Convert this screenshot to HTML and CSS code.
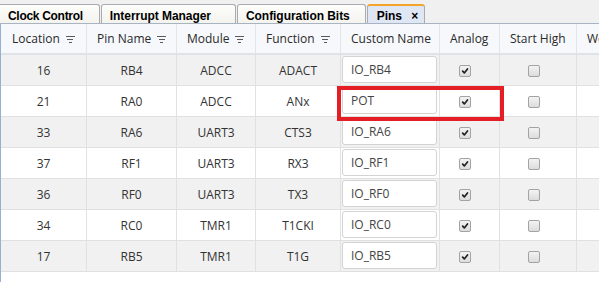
FILE: index.html
```html
<!DOCTYPE html>
<html lang="en">
<head>
<meta charset="utf-8">
<title>Pins</title>
<link rel="stylesheet" href="styles.css">
</head>
<body>
<div class="tabs">
  <div class="tab">Clock Control</div>
  <div class="tab wide">Interrupt Manager</div>
  <div class="tab narrow">Configuration Bits</div>
  <div class="tab active">Pins <span class="close">×</span></div>
</div>
<div class="grid-wrap">
  <div class="row head">
    <div class="cell">Location <span class="filter"><i></i><i></i><i></i></span></div>
    <div class="cell">Pin Name <span class="filter"><i></i><i></i><i></i></span></div>
    <div class="cell">Module <span class="filter"><i></i><i></i><i></i></span></div>
    <div class="cell">Function <span class="filter"><i></i><i></i><i></i></span></div>
    <div class="cell">Custom Name</div>
    <div class="cell">Analog</div>
    <div class="cell">Start High</div>
    <div class="cell">Weak Pullup</div>
  </div>

  <div class="row">
    <div class="cell c">16</div><div class="cell c">RB4</div><div class="cell c">ADCC</div><div class="cell c">ADACT</div>
    <div class="cell inp"><span class="input">IO_RB4</span></div>
    <div class="cell chk"><span class="box on"><svg viewBox="0 0 12 12"><path d="M3.2 6.2 L5.2 8.3 L9 3.6"/></svg></span></div>
    <div class="cell chk"><span class="box"></span></div>
    <div class="cell"></div>
  </div>
  <div class="row">
    <div class="cell c">21</div><div class="cell c">RA0</div><div class="cell c">ADCC</div><div class="cell c">ANx</div>
    <div class="cell inp"><span class="input">POT</span></div>
    <div class="cell chk"><span class="box on"><svg viewBox="0 0 12 12"><path d="M3.2 6.2 L5.2 8.3 L9 3.6"/></svg></span></div>
    <div class="cell chk"><span class="box"></span></div>
    <div class="cell"></div>
  </div>
  <div class="row">
    <div class="cell c">33</div><div class="cell c">RA6</div><div class="cell c">UART3</div><div class="cell c">CTS3</div>
    <div class="cell inp"><span class="input">IO_RA6</span></div>
    <div class="cell chk"><span class="box on"><svg viewBox="0 0 12 12"><path d="M3.2 6.2 L5.2 8.3 L9 3.6"/></svg></span></div>
    <div class="cell chk"><span class="box"></span></div>
    <div class="cell"></div>
  </div>
  <div class="row">
    <div class="cell c">37</div><div class="cell c">RF1</div><div class="cell c">UART3</div><div class="cell c">RX3</div>
    <div class="cell inp"><span class="input">IO_RF1</span></div>
    <div class="cell chk"><span class="box on"><svg viewBox="0 0 12 12"><path d="M3.2 6.2 L5.2 8.3 L9 3.6"/></svg></span></div>
    <div class="cell chk"><span class="box"></span></div>
    <div class="cell"></div>
  </div>
  <div class="row">
    <div class="cell c">36</div><div class="cell c">RF0</div><div class="cell c">UART3</div><div class="cell c">TX3</div>
    <div class="cell inp"><span class="input">IO_RF0</span></div>
    <div class="cell chk"><span class="box on"><svg viewBox="0 0 12 12"><path d="M3.2 6.2 L5.2 8.3 L9 3.6"/></svg></span></div>
    <div class="cell chk"><span class="box"></span></div>
    <div class="cell"></div>
  </div>
  <div class="row">
    <div class="cell c">34</div><div class="cell c">RC0</div><div class="cell c">TMR1</div><div class="cell c">T1CKI</div>
    <div class="cell inp"><span class="input">IO_RC0</span></div>
    <div class="cell chk"><span class="box on"><svg viewBox="0 0 12 12"><path d="M3.2 6.2 L5.2 8.3 L9 3.6"/></svg></span></div>
    <div class="cell chk"><span class="box"></span></div>
    <div class="cell"></div>
  </div>
  <div class="row">
    <div class="cell c">17</div><div class="cell c">RB5</div><div class="cell c">TMR1</div><div class="cell c">T1G</div>
    <div class="cell inp"><span class="input">IO_RB5</span></div>
    <div class="cell chk"><span class="box on"><svg viewBox="0 0 12 12"><path d="M3.2 6.2 L5.2 8.3 L9 3.6"/></svg></span></div>
    <div class="cell chk"><span class="box"></span></div>
    <div class="cell"></div>
  </div>

  <div class="highlight"></div>
</div>
</body>
</html>
```

FILE: styles.css
```css
html, body {
  margin: 0;
  padding: 0;
  width: 599px;
  height: 282px;
  overflow: hidden;
  background: #f0f0f0;
  font-family: "Open Sans", "Liberation Sans", sans-serif;
  color: #333;
}

.tabs {
  display: flex;
  align-items: flex-end;
  gap: 1px;
  height: 24px;
  box-sizing: border-box;
  border-bottom: 1px solid #a9b4c2;
  background: #f0f0f0;
}

.tab {
  height: 19px;
  box-sizing: border-box;
  padding: 4px 19px 0 8px;
  border: 1px solid #a8acb2;
  border-bottom: none;
  border-radius: 3px 3px 0 0;
  background: linear-gradient(#fdfdfb, #f4f3ee);
  font-family: "Liberation Sans", Arial, sans-serif;
  font-weight: bold;
  font-size: 12px;
  letter-spacing: -0.05px;
  line-height: 14px;
  color: #000;
  white-space: nowrap;
}

.tab:first-child {
  border-left: none;
  border-radius: 0 3px 0 0;
  padding-right: 16px;
  letter-spacing: -0.3px;
}

.tab.wide {
  padding-right: 24px;
}

.tab.narrow {
  padding-right: 15px;
}

.tab.active {
  padding-right: 6px;
  padding-left: 9px;
  border-top: 2px solid #f5a42a;
  padding-top: 3px;
  background: #dfe6f4;
}

.close {
  font-size: 12px;
  margin-left: 6px;
  letter-spacing: 0;
}

.grid-wrap {
  position: relative;
  height: 258px;
  background: #fff;
  border-left: 1px solid #97afd0;
  overflow: hidden;
}

.row {
  display: grid;
  grid-template-columns: 86px 90px 79px 85px 99px 60px 77px 120px;
  height: 31px;
  box-sizing: border-box;
  border-bottom: 1px solid #e0e0e0;
}

.row:nth-child(even) {
  background: #f1f1f1;
}

.row.head {
  height: 31px;
  background: #f6f8fb;
  border-bottom: 2px solid #dfe3e8;
}

.cell {
  display: flex;
  align-items: center;
  box-sizing: border-box;
  border-right: 1px solid #e1e1e1;
  font-size: 12px;
  white-space: nowrap;
  overflow: hidden;
}

.head .cell {
  padding-left: 10px;
  border-right-color: #e2e6eb;
  color: #2a2a2a;
}

.head .cell:first-child {
  padding-left: 11px;
}

.cell.c {
  justify-content: center;
}

.filter {
  display: inline-flex;
  flex-direction: column;
  align-items: center;
  gap: 2px;
  width: 9px;
  margin-left: 6px;
  margin-top: 1px;
}

.filter i {
  display: block;
  height: 1px;
  background: #5a5a5a;
  width: 9px;
}

.filter i:nth-child(2) { width: 6px; }
.filter i:nth-child(3) { width: 3px; }

.cell.inp {
  padding: 1px 2px 2px 1px;
  align-items: stretch;
}

.input {
  flex: 1;
  display: flex;
  align-items: center;
  padding-left: 8px;
  background: #fff;
  border: 1px solid #d3d3d3;
  border-radius: 3px;
  color: #444;
}

.cell.chk {
  justify-content: center;
  padding-right: 9px;
}

.box {
  width: 12px;
  height: 12px;
  box-sizing: border-box;
  border: 1px solid #a3a3a3;
  border-radius: 2px;
  background: linear-gradient(#f3f3f3, #dcdcdc);
  margin-top: 2px;
}

.box svg {
  display: block;
  width: 10px;
  height: 10px;
}

.box svg path {
  fill: none;
  stroke: #1e1e1e;
  stroke-width: 2;
  stroke-linecap: round;
  stroke-linejoin: round;
}

.highlight {
  position: absolute;
  left: 336px;
  top: 62px;
  width: 167px;
  height: 35px;
  box-sizing: border-box;
  border: 4px solid #e51e25;
}
```
